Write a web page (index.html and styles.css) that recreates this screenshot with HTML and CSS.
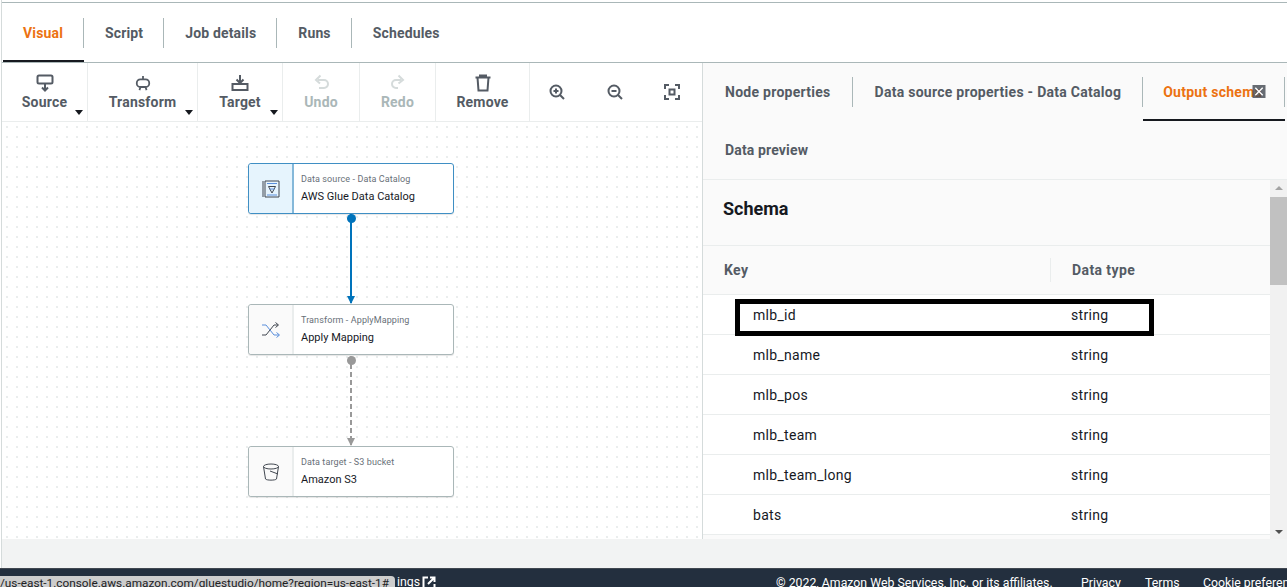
FILE: index.html
```html
<!DOCTYPE html>
<html lang="en">
<head>
    <meta charset="UTF-8">
    <title>Visual job editor</title>
    <link rel="stylesheet" href="styles.css">
</head>
<body>
    <div class="app">
        <div class="job-tabs">
            <div class="tab tab-active">Visual</div>
            <div class="tab">Script</div>
            <div class="tab">Job details</div>
            <div class="tab">Runs</div>
            <div class="tab tab-last">Schedules</div>
        </div>

        <div class="workspace">
            <div class="editor">
                <div class="toolbar">
                    <div class="tool tool-source">
                        <svg class="tool-icon" viewBox="0 0 18 18"><rect x="1.500" y="1.500" width="15" height="8" rx="1.500"/><path d="M9 9.500v7M6 13.500l3 3 3-3"/></svg>
                        <span>Source</span><i class="caret"></i>
                    </div>
                    <div class="tool tool-transform">
                        <svg class="tool-icon" viewBox="0 0 18 18"><path d="M9 1v4M6 14l-1 3M12 14l1 3"/><rect x="2" y="5" width="14" height="8.500" rx="4"/></svg>
                        <span>Transform</span><i class="caret"></i>
                    </div>
                    <div class="tool tool-target">
                        <svg class="tool-icon" viewBox="0 0 18 18"><path d="M1.500 10h15v6h-15zM9 1v8M5.500 5.500L9 9l3.500-3.500"/></svg>
                        <span>Target</span><i class="caret"></i>
                    </div>
                    <div class="tool tool-undo tool-off">
                        <svg class="tool-icon" viewBox="0 0 18 18"><path d="M6 7h6a3.500 3.500 0 0 1 0 8H7M8.500 2.500L4 7l4 3.500" transform="translate(0 -1)"/></svg>
                        <span>Undo</span>
                    </div>
                    <div class="tool tool-redo tool-off">
                        <svg class="tool-icon" viewBox="0 0 18 18"><path d="M12 7H7a3.500 3.500 0 0 0 0 8h2M9.500 2.500L14 7l-4.500 3.500" transform="translate(0 -1)"/></svg>
                        <span>Redo</span>
                    </div>
                    <div class="tool tool-remove">
                        <svg class="tool-icon" viewBox="0 0 18 18"><path d="M1.500 3.500h15M6 3.500V1.500h6v2M3.500 3.500l1 13h9l1-13"/></svg>
                        <span>Remove</span>
                    </div>
                    <div class="zoom-tools">
                        <svg class="zoom-icon" viewBox="0 0 16 16"><circle cx="7" cy="7" r="5.500"/><path d="M11 11l4 4M4.500 7h5M7 4.500v5"/></svg>
                        <svg class="zoom-icon" viewBox="0 0 16 16"><circle cx="7" cy="7" r="5.500"/><path d="M11 11l4 4M4.500 7h5"/></svg>
                        <svg class="zoom-icon" viewBox="0 0 16 16"><path d="M1 5V1h4M11 1h4v4M15 11v4h-4M5 15H1v-4M5.500 5.500h5v5h-5z"/></svg>
                    </div>
                </div>

                <div class="canvas">
                    <div class="node node-selected node-1">
                        <div class="node-icon">
                            <svg viewBox="0 0 18 18" width="18" height="18"><path class="ink" d="M3 1h14v16H3zM1 1v16"/><path class="ink" d="M6.500 6.500h7L10 13z"/><path class="blue" d="M5 3.500h10M5 15h10M7.500 9h5"/></svg>
                        </div>
                        <div class="node-text">
                            <div class="node-kind">Data source - Data Catalog</div>
                            <div class="node-name">AWS Glue Data Catalog</div>
                        </div>
                    </div>

                    <div class="edge edge-solid"></div>

                    <div class="node node-2">
                        <div class="node-icon">
                            <svg viewBox="0 0 20 16" width="20" height="16"><path class="ink" d="M1 13h4l8-10h4M14.500 .5L17.500 3l-3 2.500"/><path class="blue" d="M1 3h4l8 10h5M15.500 10.500l3 2.500-3 2.500"/></svg>
                        </div>
                        <div class="node-text">
                            <div class="node-kind">Transform - ApplyMapping</div>
                            <div class="node-name">Apply Mapping</div>
                        </div>
                    </div>

                    <div class="edge edge-dashed"></div>

                    <div class="node node-3">
                        <div class="node-icon">
                            <svg viewBox="0 0 18 18" width="18" height="18"><ellipse class="ink" cx="9" cy="3.500" rx="7.500" ry="2.500"/><path class="ink" d="M1.500 3.500L3.500 16c1 1.500 10 1.500 11 0l2-12.500M8 8l8 3"/></svg>
                        </div>
                        <div class="node-text">
                            <div class="node-kind">Data target - S3 bucket</div>
                            <div class="node-name">Amazon S3</div>
                        </div>
                    </div>
                </div>
            </div>

            <div class="side">
                <div class="side-tabs">
                    <div class="side-tab">Node properties</div>
                    <div class="side-tab">Data source properties - Data Catalog</div>
                    <div class="side-tab side-tab-active">Output schema</div>
                </div>
                <div class="side-tabs-second">Data preview</div>
                <svg class="expand-icon" viewBox="0 0 14 14"><path d="M0 0h14v14H0z" fill="#414750" fill-opacity=".8"/><path d="M3 3l8 8M11 3l-8 8" fill="none" stroke="#fff" stroke-width="1.500"/></svg>

                <div class="schema">
                    <div class="schema-body">
                        <h2 class="schema-title">Schema</h2>
                        <div class="schema-head">
                            <div class="col-key">Key</div>
                            <div class="col-type">Data type</div>
                        </div>
                        <div class="row"><span class="row-key">mlb_id</span><span class="row-type">string</span></div>
                        <div class="row"><span class="row-key">mlb_name</span><span class="row-type">string</span></div>
                        <div class="row"><span class="row-key">mlb_pos</span><span class="row-type">string</span></div>
                        <div class="row"><span class="row-key">mlb_team</span><span class="row-type">string</span></div>
                        <div class="row"><span class="row-key">mlb_team_long</span><span class="row-type">string</span></div>
                        <div class="row"><span class="row-key">bats</span><span class="row-type">string</span></div>
                        <div class="highlight"></div>
                    </div>
                    <div class="scrollbar">
                        <i class="arrow-up"></i>
                        <div class="thumb"></div>
                        <i class="arrow-down"></i>
                    </div>
                </div>
            </div>
        </div>

        <div class="gap"></div>

        <div class="footer">
            <div class="footer-left">
                <span>ings</span>
                <svg class="ext-icon" viewBox="0 0 14 14"><path d="M6 1.500H1.500v11h11V8M8 1.500h4.500V6M12.500 1.500L6 8" fill="none" stroke="#fff" stroke-width="2"/></svg>
            </div>
            <div class="footer-right">
                <span class="copyright">&copy; 2022, Amazon Web Services, Inc. or its affiliates.</span>
                <span class="foot-privacy">Privacy</span>
                <span class="foot-terms">Terms</span>
                <span class="foot-cookie">Cookie preferences</span>
            </div>
        </div>
    </div>

    <!-- browser link preview -->
    <div class="status-url">/us-east-1.console.aws.amazon.com/gluestudio/home?region=us-east-1#</div>
</body>
</html>
```

FILE: styles.css
```css
html, body {
    margin: 0;
    padding: 0;
    height: 587px;
    overflow: hidden;
}
body {
    font-family: 'Roboto', 'Liberation Sans', sans-serif;
    font-size: 14px;
    color: #16191f;
    background-color: #fff;
    position: relative;
}
.app {
    height: 587px;
    margin-left: 1px;
    border-left: 1px solid #d5dbdb;
    display: flex;
    flex-direction: column;
    box-sizing: border-box;
    padding-top: 2px;
}

/* job tabs */
.job-tabs {
    height: 61px;
    flex: none;
    display: flex;
    align-items: center;
    background-color: #fff;
    border-top: 1px solid #aab7b8;
    border-bottom: 1px solid #aab7b8;
    box-sizing: border-box;
    padding-left: 1px;
}
.tab {
    height: 30px;
    line-height: 30px;
    padding: 0 20px 0 21px;
    border-right: 1px solid #aab7b8;
    font-weight: 700;
    color: #545b64;
    position: relative;
    letter-spacing: .15px;
}
.tab-last {
    border-right: none;
}
.tab-active {
    color: #ec7211;
    padding-left: 20px;
}
.tab-active::after {
    content: "";
    position: absolute;
    left: 0;
    right: -1px;
    bottom: -14px;
    height: 2px;
    background-color: #16191f;
}

.workspace {
    display: flex;
    height: 476px;
    flex: none;
}
.editor {
    width: 700px;
    flex: none;
    display: flex;
    flex-direction: column;
    border-right: 1px solid #d5dbdb;
}

/* toolbar */
.toolbar {
    height: 59px;
    flex: none;
    display: flex;
    background-color: #fff;
    border-bottom: 1px solid #eaeded;
    box-sizing: border-box;
}
.tool {
    position: relative;
    display: flex;
    flex-direction: column;
    align-items: center;
    padding-top: 11px;
    box-sizing: border-box;
    border-right: 1px solid #eaeded;
    font-weight: 700;
    color: #545b64;
    letter-spacing: .2px;
}
.tool span {
    margin-top: 2px;
    line-height: 17px;
}
.tool-source { width: 86px; }
.tool-transform { width: 110px; }
.tool-target { width: 85px; }
.tool-undo { width: 77px; }
.tool-redo { width: 76px; }
.tool-remove { width: 94px; }
.tool-off {
    color: #aab7b8;
}
.tool-icon {
    width: 18px;
    height: 18px;
    fill: none;
    stroke: #545b64;
    stroke-width: 2;
}
.tool-transform .tool-icon {
    width: 16px;
}
.tool-off .tool-icon {
    stroke: #d5dbdb;
}
.caret {
    position: absolute;
    right: 4px;
    bottom: 6px;
    border-left: 4px solid transparent;
    border-right: 4px solid transparent;
    border-top: 5px solid #16191f;
}
.zoom-tools {
    flex: 1;
    display: flex;
    gap: 41.500px;
    padding: 21px 0 0 19px;
    box-sizing: border-box;
}
.zoom-icon {
    width: 16px;
    height: 16px;
    fill: none;
    stroke: #545b64;
    stroke-width: 2;
}

/* canvas */
.canvas {
    flex: 1;
    position: relative;
    background-color: #fff;
    background-image: radial-gradient(circle, #eaeded 0.7px, transparent 0.9px);
    background-size: 10px 10px;
}
.node {
    position: absolute;
    left: 246px;
    width: 206px;
    height: 51px;
    box-sizing: border-box;
    display: flex;
    background-color: #fff;
    border: 1px solid #aab7b8;
    border-radius: 3px;
    box-shadow: 0 1px 1px rgba(0, 0, 0, 0.1);
}
.node-1 { top: 41px; }
.node-2 { top: 182px; }
.node-3 { top: 324px; }
.node-selected {
    border-color: #3f8fc4;
}
.node-icon {
    width: 45px;
    flex: none;
    display: flex;
    align-items: center;
    justify-content: center;
    background-color: #fafafa;
    border-right: 2px solid #eaeded;
    box-sizing: border-box;
    border-radius: 3px 0 0 3px;
}
.node-selected .node-icon {
    background-color: #e6f4fd;
    border-right-color: #85b8d9;
}
.ink {
    fill: none;
    stroke: #414750;
    stroke-width: 1;
}
.blue {
    fill: none;
    stroke: #5a8fdc;
    stroke-width: 1;
}
.node-text {
    padding: 9px 0 0 7px;
}
.node-kind {
    font-size: 9px;
    line-height: 12px;
    letter-spacing: .1px;
    color: #687078;
}
.node-name {
    font-size: 11px;
    line-height: 14px;
    margin-top: 5px;
    color: #16191f;
}
.edge {
    position: absolute;
    left: 348px;
    width: 2px;
}
.edge::before {
    content: "";
    position: absolute;
    left: -3.500px;
    top: 0;
    width: 9px;
    height: 9px;
    border-radius: 50%;
}
.edge::after {
    content: "";
    position: absolute;
    left: -3px;
    bottom: -1px;
    border-left: 4px solid transparent;
    border-right: 4px solid transparent;
}
.edge-solid {
    top: 92px;
    height: 89px;
    background-color: #0073bb;
}
.edge-solid::before {
    background-color: #0073bb;
}
.edge-solid::after {
    border-top: 8px solid #0073bb;
}
.edge-dashed {
    top: 234px;
    height: 89px;
    background-image: linear-gradient(#999 60%, transparent 60%);
    background-size: 2px 8px;
}
.edge-dashed::before {
    background-color: #999;
}
.edge-dashed::after {
    border-top: 8px solid #999;
}

/* right panel */
.side {
    flex: 1;
    min-width: 0;
    position: relative;
    display: flex;
    flex-direction: column;
    background-color: #fafafa;
}
.side-tabs {
    height: 58px;
    flex: none;
    display: flex;
    align-items: center;
    white-space: nowrap;
}
.side-tab {
    height: 30px;
    line-height: 30px;
    padding: 0 21px 0 22px;
    border-right: 1px solid #aab7b8;
    font-weight: 700;
    letter-spacing: .27px;
    color: #545b64;
    position: relative;
}
.side-tab-active {
    color: #ec7211;
    width: 142px;
    padding-left: 20px;
    box-sizing: border-box;
    flex: none;
}
.side-tab-active::after {
    content: "";
    position: absolute;
    left: 0;
    right: -1px;
    bottom: -14px;
    height: 2px;
    background-color: #16191f;
}
.side-tabs-second {
    height: 59px;
    flex: none;
    line-height: 58px;
    padding-left: 22px;
    font-weight: 700;
    letter-spacing: .15px;
    color: #545b64;
    border-bottom: 1px solid #eaeded;
    box-sizing: border-box;
}
.expand-icon {
    position: absolute;
    left: 549px;
    top: 22px;
    width: 14px;
    height: 13px;
}
.schema {
    flex: 1;
    display: flex;
    min-height: 0;
}
.schema-body {
    flex: 1;
    min-width: 0;
    position: relative;
    overflow: hidden;
}
.schema-title {
    margin: 0;
    height: 66px;
    line-height: 58px;
    padding-left: 20px;
    font-size: 18px;
    font-weight: 700;
    color: #16191f;
    border-bottom: 1px solid #eaeded;
    box-sizing: border-box;
}
.schema-head {
    height: 49px;
    display: flex;
    align-items: center;
    border-bottom: 1px solid #eaeded;
    box-sizing: border-box;
    font-weight: 700;
    letter-spacing: .4px;
    color: #545b64;
}
.col-key {
    width: 348px;
    padding-left: 21px;
    box-sizing: border-box;
    border-right: 1px solid #eaeded;
    line-height: 24px;
}
.col-type {
    padding-left: 21px;
    line-height: 24px;
}
.row {
    height: 40px;
    display: flex;
    align-items: center;
    background-color: #fff;
    border-bottom: 1px solid #eaeded;
    box-sizing: border-box;
    letter-spacing: .3px;
    color: #16191f;
}
.row-key {
    width: 368px;
    padding-left: 50px;
    box-sizing: border-box;
}
.highlight {
    position: absolute;
    left: 32px;
    top: 119px;
    width: 419px;
    height: 37px;
    box-sizing: border-box;
    border: 5px solid #000;
}
.scrollbar {
    width: 17px;
    flex: none;
    position: relative;
    background-color: #f1f1f1;
}
.thumb {
    position: absolute;
    left: 0;
    right: 0;
    top: 17px;
    height: 88px;
    background-color: #c1c1c1;
}
.arrow-up, .arrow-down {
    position: absolute;
    left: 5px;
    border-left: 4px solid transparent;
    border-right: 4px solid transparent;
}
.arrow-up {
    top: 6px;
    border-bottom: 4px solid #a3a3a3;
}
.arrow-down {
    bottom: 5px;
    border-top: 4px solid #505050;
}

.gap {
    height: 29px;
    flex: none;
    background-color: #f2f3f3;
}

/* footer */
.footer {
    height: 30px;
    flex: none;
    background-color: #232f3e;
    border-top: 1px solid #414750;
    box-sizing: border-box;
    color: #fff;
    font-size: 12.300px;
    display: flex;
    justify-content: space-between;
    line-height: 29px;
    margin-left: -2px;
}
.footer-left {
    margin-left: 397px;
    display: flex;
    gap: 2px;
    height: 18px;
    line-height: 26px;
}
.ext-icon {
    width: 14px;
    height: 14px;
    margin-top: 7px;
}
.footer-right {
    white-space: nowrap;
    width: 511px;
    display: flex;
    overflow: hidden;
}
.copyright { width: 305px; flex: none; }
.foot-privacy { width: 64px; flex: none; }
.foot-terms { width: 58px; flex: none; }
.foot-cookie { flex: none; }

.status-url {
    position: absolute;
    left: 0;
    bottom: 0;
    width: 395px;
    height: 11px;
    line-height: 15px;
    overflow: hidden;
    white-space: nowrap;
    background-color: #cdcdcd;
    color: #202124;
    font-size: 11.800px;
    border-top-right-radius: 4px;
}
```
